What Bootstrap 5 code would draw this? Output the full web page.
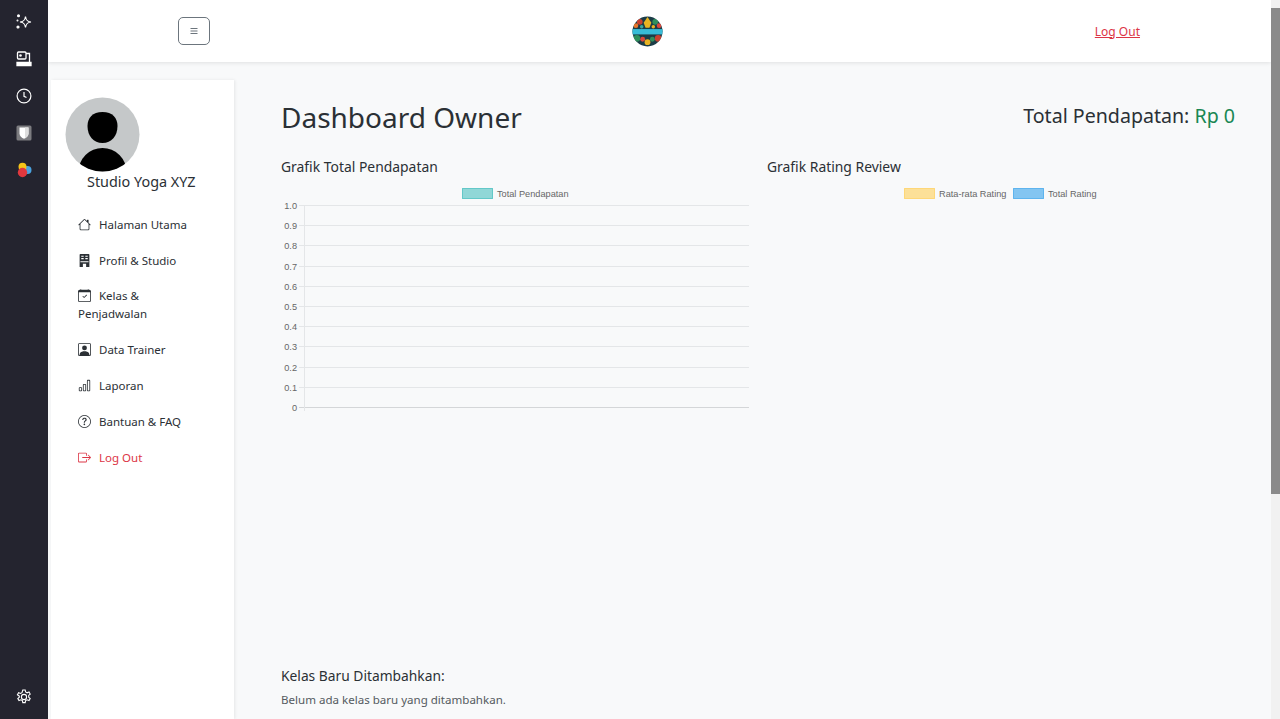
<!DOCTYPE html>
<html>
<head>
  <title>Dashboard Owner</title>
  <link href="https://cdn.jsdelivr.net/npm/bootstrap@5.3.0/dist/css/bootstrap.min.css" rel="stylesheet">
  <style>
    html, body { height: 100%; overflow: hidden; }
    body { font-family: "Noto Sans", "Open Sans", sans-serif; background: #f8f9fa; color: #2b3035; }
    .rail { width: 48px; background: #24242f; flex: none; padding: 14px 0 14px; }
    .rail-btn { width: 48px; height: 37px; }
    .page-scrollbar { width: 9px; background: #f1f1f1; flex: none; padding-top: 8px; }
    .page-scrollbar div { height: 486px; background: #8a8a8a; }
    .topbar { height: 62px; flex: none; box-shadow: 0 1px 4px rgba(0,0,0,.1); z-index: 2; padding: 0 131px 0 130px; }
    .menu-btn { width: 32px; height: 28px; padding: 0; border: 1px solid #6c757d; border-radius: 5px; background: #fff; margin-bottom: 1px; }
    .top-logo { margin-right: 10px; }
    .top-logout { font-size: 12px; color: #dc3545; margin-top: 1px; }
    .side-panel { width: 183px; margin: 18px 0 0 3px; padding: 17px 18px 0 14px; flex: none; box-shadow: 1px 0 3px rgba(0,0,0,.08); }
    .avatar-round { width: 75px; height: 75px; display: block; }
    .studio-name { font-size: 14.400px; margin: 0 0 0 22px; line-height: 20px; white-space: nowrap; }
    .side-menu { margin-top: 15px; font-size: 11.500px; line-height: 18px; }
    .side-menu a { display: block; color: #2b3035; text-decoration: none; padding: 8.900px 18px 8.900px 13px; }
    .side-menu a.danger-item { color: #dc3545; }
    .side-menu svg { width: 13px; height: 13px; margin-right: 8px; vertical-align: -2px; }
    .main-area { padding: 0 36px 0 47px; }
    .title-line { height: 95px; padding-top: 35px; }
    .title-line h1 { font-size: 28px; line-height: 40px; margin: 0; font-weight: 400; }
    .title-line h4 { font-size: 19.600px; line-height: 28px; margin: 5px 0 0; font-weight: 400; }
    .green-total { color: #198754; }
    .chart-row { --bs-gutter-x: 18px; }
    .chart-title { font-size: 13.900px; line-height: 20px; font-weight: 400; margin: 0 0 7px; }
    .chart-svg { display: block; width: 468px; height: 232px; font-family: "Liberation Sans", Arial, sans-serif; font-size: 9.200px; }
    .chart-box { height: 509px; }
    .new-title { font-size: 13.800px; line-height: 20px; font-weight: 400; margin: 0 0 5px; }
    .new-note { font-size: 11.550px; line-height: 18px; color: #555b61; margin: 0; }
  </style>
</head>
<body class="d-flex">
  <aside class="rail d-flex flex-column align-items-center">
    <div class="rail-btn d-flex align-items-start justify-content-center">
      <svg width="16" height="16" viewBox="0 0 16 16" fill="none" stroke="#fff" stroke-width="1.200"><path d="M9.500 2.500 C10 6 11 7.500 15 8 C11 8.500 10 10 9.500 13.500 C9 10 8 8.500 4 8 C8 7.500 9 6 9.500 2.500Z"/><circle cx="2.500" cy="1.800" r=".9" fill="#fff"/><circle cx="2" cy="13" r="1" fill="#fff"/><circle cx="1.500" cy="6.500" r=".4" fill="#fff"/></svg>
    </div>
    <div class="rail-btn d-flex align-items-start justify-content-center">
      <svg width="16" height="16" viewBox="0 0 16 16" fill="none" stroke="#fff" stroke-width="1.300"><rect x="1.500" y="1" width="8.500" height="7" rx="1"/><path d="M10 2.500h3.500v8.500"/><path d="M1 11.500h14v3H1z" fill="#fff"/><circle cx="4.500" cy="4.500" r="1.300" fill="#fff" stroke="none"/></svg>
    </div>
    <div class="rail-btn d-flex align-items-start justify-content-center">
      <svg width="16" height="16" viewBox="0 0 16 16" fill="none" stroke="#fff" stroke-width="1.200"><circle cx="8" cy="8" r="6.900"/><path d="M8 4v4.300l2.500 1.200"/></svg>
    </div>
    <div class="rail-btn d-flex align-items-start justify-content-center">
      <svg width="16" height="16" viewBox="0 0 16 16"><rect x=".5" y=".5" width="15" height="15" rx="1.500" fill="#7c7c80"/><path d="M3.500 2.500h9v6c0 2.700-2.200 4.200-4.500 5.300-2.300-1.100-4.500-2.600-4.500-5.300z" fill="#fff"/><path d="M9 2.500h3.500v6c0 2-1.500 3.500-3.500 4.700z" fill="#dedede"/></svg>
    </div>
    <div class="rail-btn d-flex align-items-start justify-content-center">
      <svg width="16" height="16" viewBox="0 0 16 16"><circle cx="11.500" cy="8" r="4" fill="#4aa3e0"/><circle cx="6.500" cy="4.800" r="4" fill="#f5c518"/><circle cx="6.500" cy="10.500" r="4.700" fill="#e0383e"/></svg>
    </div>
    <div class="mt-auto lh-1">
      <svg width="16" height="16" viewBox="0 0 16 16" fill="none" stroke="#fff" stroke-width="1.100"><circle cx="8" cy="8" r="2.600"/><path d="M6.800 1h2.400l.4 2 1.500.8 1.900-.8 1.200 2.100-1.500 1.300v1.800l1.500 1.300-1.200 2.100-1.900-.8-1.500.8-.4 2H6.800l-.4-2-1.500-.8-1.900.8-1.200-2.100 1.500-1.300V7.100L1.400 5.800l1.200-2.100 1.900.8 1.500-.8z"/></svg>
    </div>
  </aside>

  <div class="flex-grow-1 d-flex flex-column overflow-hidden">
    <nav class="topbar bg-white d-flex align-items-center justify-content-between">
      <button class="menu-btn d-flex align-items-center justify-content-center" type="button" aria-label="menu">
        <svg width="10" height="10" viewBox="0 0 10 10" stroke="#6c757d" stroke-width="1"><path d="M1.500 2.500h7M1.500 5h7M1.500 7.500h7"/></svg>
      </button>
      <svg class="top-logo" width="31" height="31" viewBox="0 0 32 32">
        <defs><clipPath id="logoClip"><circle cx="16" cy="16" r="15.500"/></clipPath></defs>
        <g clip-path="url(#logoClip)">
          <rect width="32" height="32" fill="#1b3c47"/>
          <path d="M16 1l4 6-2 5h-4l-2-5z" fill="#e8b322"/>
          <circle cx="8" cy="6" r="3" fill="#c9402f"/>
          <circle cx="24" cy="6" r="3" fill="#2f8f5b"/>
          <circle cx="4" cy="10" r="2.500" fill="#e8762c"/>
          <circle cx="28" cy="10" r="2.500" fill="#d9483b"/>
          <circle cx="10" cy="11" r="1.800" fill="#3aa7a0"/>
          <circle cx="22" cy="11" r="1.800" fill="#e8b322"/>
          <circle cx="5" cy="23" r="3.500" fill="#2f8f5b"/>
          <circle cx="27" cy="23" r="3.500" fill="#c9402f"/>
          <circle cx="11" cy="24" r="2.500" fill="#d9483b"/>
          <circle cx="21" cy="24" r="2.500" fill="#2f8f5b"/>
          <circle cx="16" cy="27" r="3" fill="#e8b322"/>
          <rect y="13.500" width="32" height="5.500" fill="#38bcd8"/>
        </g>
      </svg>
      <a href="#" class="top-logout">Log Out</a>
    </nav>

    <div class="flex-grow-1 d-flex overflow-hidden">
      <aside class="side-panel bg-white">
        <svg class="avatar-round" viewBox="0 0 75 75">
          <defs><clipPath id="avClip"><circle cx="37.500" cy="37.500" r="37"/></clipPath></defs>
          <circle cx="37.500" cy="37.500" r="37" fill="#c5c8c9"/>
          <g clip-path="url(#avClip)">
            <path d="M37.500 15c10 0 15 6 15 14 0 10-6 17-15 17s-15-7-15-17c0-8 5-14 15-14z"/>
            <ellipse cx="37.500" cy="75" rx="24" ry="24"/>
          </g>
        </svg>
        <div class="studio-name">Studio Yoga XYZ</div>
        <nav class="side-menu">
          <a href="#"><svg viewBox="0 0 16 16" fill="currentColor"><path d="M8.707 1.500a1 1 0 0 0-1.414 0L.646 8.146a.5.5 0 0 0 .708.708L2 8.207V13.500A1.500 1.500 0 0 0 3.500 15h9a1.500 1.500 0 0 0 1.500-1.500V8.207l.646.647a.5.5 0 0 0 .708-.708L13 5.793V2.500a.5.5 0 0 0-.5-.5h-1a.5.5 0 0 0-.5.5v1.293L8.707 1.500ZM13 7.207V13.500a.5.5 0 0 1-.5.5h-9a.5.5 0 0 1-.5-.5V7.207l5-5 5 5Z"/></svg>Halaman Utama</a>
          <a href="#"><svg viewBox="0 0 16 16" fill="currentColor"><path d="M3 0h10a1 1 0 0 1 1 1v15H2V1a1 1 0 0 1 1-1zm1 2v1.500h3V2zm5 0v1.500h3V2zM4 5v1.500h3V5zm5 0v1.500h3V5zM3 9v1h10V9zm3 3v4h4v-4z"/></svg>Profil &amp; Studio</a>
          <a href="#"><svg viewBox="0 0 16 16" fill="currentColor"><path d="M10.854 7.146a.5.5 0 0 1 0 .708l-3 3a.5.5 0 0 1-.708 0l-1.500-1.500a.5.5 0 1 1 .708-.708L7.500 9.793l2.646-2.647a.5.5 0 0 1 .708 0z"/><path d="M3.500 0a.5.5 0 0 1 .5.5V1h8V.5a.5.5 0 0 1 1 0V1h1a2 2 0 0 1 2 2v11a2 2 0 0 1-2 2H2a2 2 0 0 1-2-2V3a2 2 0 0 1 2-2h1V.5a.5.5 0 0 1 .5-.5zM1 4v10a1 1 0 0 0 1 1h12a1 1 0 0 0 1-1V4H1z"/></svg>Kelas &amp; Penjadwalan</a>
          <a href="#"><svg viewBox="0 0 16 16" fill="currentColor"><path d="M11 6a3 3 0 1 1-6 0 3 3 0 0 1 6 0z"/><path d="M2 0a2 2 0 0 0-2 2v12a2 2 0 0 0 2 2h12a2 2 0 0 0 2-2V2a2 2 0 0 0-2-2H2zm12 1a1 1 0 0 1 1 1v12a1 1 0 0 1-1 1v-1c0-1-1-4-6-4s-6 3-6 4v1a1 1 0 0 1-1-1V2a1 1 0 0 1 1-1h12z"/></svg>Data Trainer</a>
          <a href="#"><svg viewBox="0 0 16 16" fill="currentColor"><path d="M4 11H2v3h2v-3zm5-4H7v7h2V7zm5-5v12h-2V2h2zm-2-1a1 1 0 0 0-1 1v12a1 1 0 0 0 1 1h2a1 1 0 0 0 1-1V2a1 1 0 0 0-1-1h-2zM6 7a1 1 0 0 1 1-1h2a1 1 0 0 1 1 1v7a1 1 0 0 1-1 1H7a1 1 0 0 1-1-1V7zm-5 4a1 1 0 0 1 1-1h2a1 1 0 0 1 1 1v3a1 1 0 0 1-1 1H2a1 1 0 0 1-1-1v-3z"/></svg>Laporan</a>
          <a href="#"><svg viewBox="0 0 16 16" fill="currentColor"><path d="M8 15A7 7 0 1 1 8 1a7 7 0 0 1 0 14zm0 1A8 8 0 1 0 8 0a8 8 0 0 0 0 16z"/><path d="M5.255 5.786a.237.237 0 0 0 .241.247h.825c.138 0 .248-.113.266-.25.090-.656.540-1.134 1.342-1.134.686 0 1.314.343 1.314 1.168 0 .635-.374.927-.965 1.371-.673.489-1.206 1.060-1.168 1.987l.003.217a.25.25 0 0 0 .25.246h.811a.25.25 0 0 0 .25-.25v-.105c0-.718.273-.927 1.010-1.486.609-.463 1.244-.977 1.244-2.056 0-1.511-1.276-2.241-2.673-2.241-1.267 0-2.655.59-2.750 2.286zm1.557 5.763c0 .533.425.927 1.010.927.609 0 1.028-.394 1.028-.927 0-.552-.42-.94-1.029-.94-.584 0-1.009.388-1.009.94z"/></svg>Bantuan &amp; FAQ</a>
          <a href="#" class="danger-item"><svg viewBox="0 0 16 16" fill="currentColor"><path d="M10 12.500a.5.5 0 0 1-.5.5h-8a.5.5 0 0 1-.5-.5v-9a.5.5 0 0 1 .5-.5h8a.5.5 0 0 1 .5.5v2a.5.5 0 0 0 1 0v-2A1.500 1.500 0 0 0 9.500 2h-8A1.500 1.500 0 0 0 0 3.500v9A1.500 1.500 0 0 0 1.500 14h8a1.500 1.500 0 0 0 1.500-1.500v-2a.5.5 0 0 0-1 0v2z"/><path d="M15.854 8.354a.5.5 0 0 0 0-.708l-3-3a.5.5 0 0 0-.708.708L14.293 7.500H5.500a.5.5 0 0 0 0 1h8.793l-2.147 2.146a.5.5 0 0 0 .708.708l3-3z"/></svg>Log Out</a>
        </nav>
      </aside>

      <main class="main-area flex-grow-1">
        <div class="title-line d-flex justify-content-between align-items-start">
          <h1>Dashboard Owner</h1>
          <h4>Total Pendapatan: <span class="green-total">Rp 0</span></h4>
        </div>
        <div class="row chart-row">
          <div class="col-6 chart-box">
            <h5 class="chart-title">Grafik Total Pendapatan</h5>
            <svg class="chart-svg" viewBox="0 0 468 232" id="chartOne"></svg>
          </div>
          <div class="col-6 chart-box">
            <h5 class="chart-title">Grafik Rating Review</h5>
            <svg class="chart-svg" viewBox="0 0 468 232">
              <rect x="137.500" y="4.500" width="30" height="10" fill="rgba(255,206,86,.6)" stroke="rgba(255,206,86,.7)"/>
              <text x="172" y="13" fill="#666">Rata-rata Rating</text>
              <rect x="246.500" y="4.500" width="30" height="10" fill="rgba(54,162,235,.6)" stroke="rgba(54,162,235,.7)"/>
              <text x="281" y="13" fill="#666">Total Rating</text>
            </svg>
          </div>
        </div>
        <h5 class="new-title">Kelas Baru Ditambahkan:</h5>
        <p class="new-note">Belum ada kelas baru yang ditambahkan.</p>
      </main>
    </div>
  </div>
  <div class="page-scrollbar"><div></div></div>

  <script src="https://cdn.jsdelivr.net/npm/bootstrap@5.3.0/dist/js/bootstrap.bundle.min.js"></script>
  <script>
    // empty chart: legend + grid lines from 1.0 down to 0
    var s = '<rect x="181.500" y="4.500" width="30" height="10" fill="rgba(75,192,192,.6)" stroke="rgba(75,192,192,.8)"/>' +
      '<text x="216" y="13" fill="#666">Total Pendapatan</text>';
    var labels = ['1.0','0.9','0.8','0.7','0.6','0.5','0.4','0.3','0.2','0.1','0'];
    labels.forEach(function (t, i) {
      var y = Math.round(21 + i * 20.2) + 0.5;
      s += '<line x1="18" x2="468" y1="' + y + '" y2="' + y + '" stroke="' + (i == 10 ? '#d4d6d8' : '#e4e6e8') + '"/>';
      s += '<text x="16" y="' + (y + 3.5) + '" text-anchor="end" fill="#666">' + t + '</text>';
    });
    s += '<line x1="23.500" x2="23.500" y1="21" y2="227" stroke="#e4e6e8"/>';
    document.getElementById('chartOne').innerHTML = s;
  </script>
</body>
</html>
